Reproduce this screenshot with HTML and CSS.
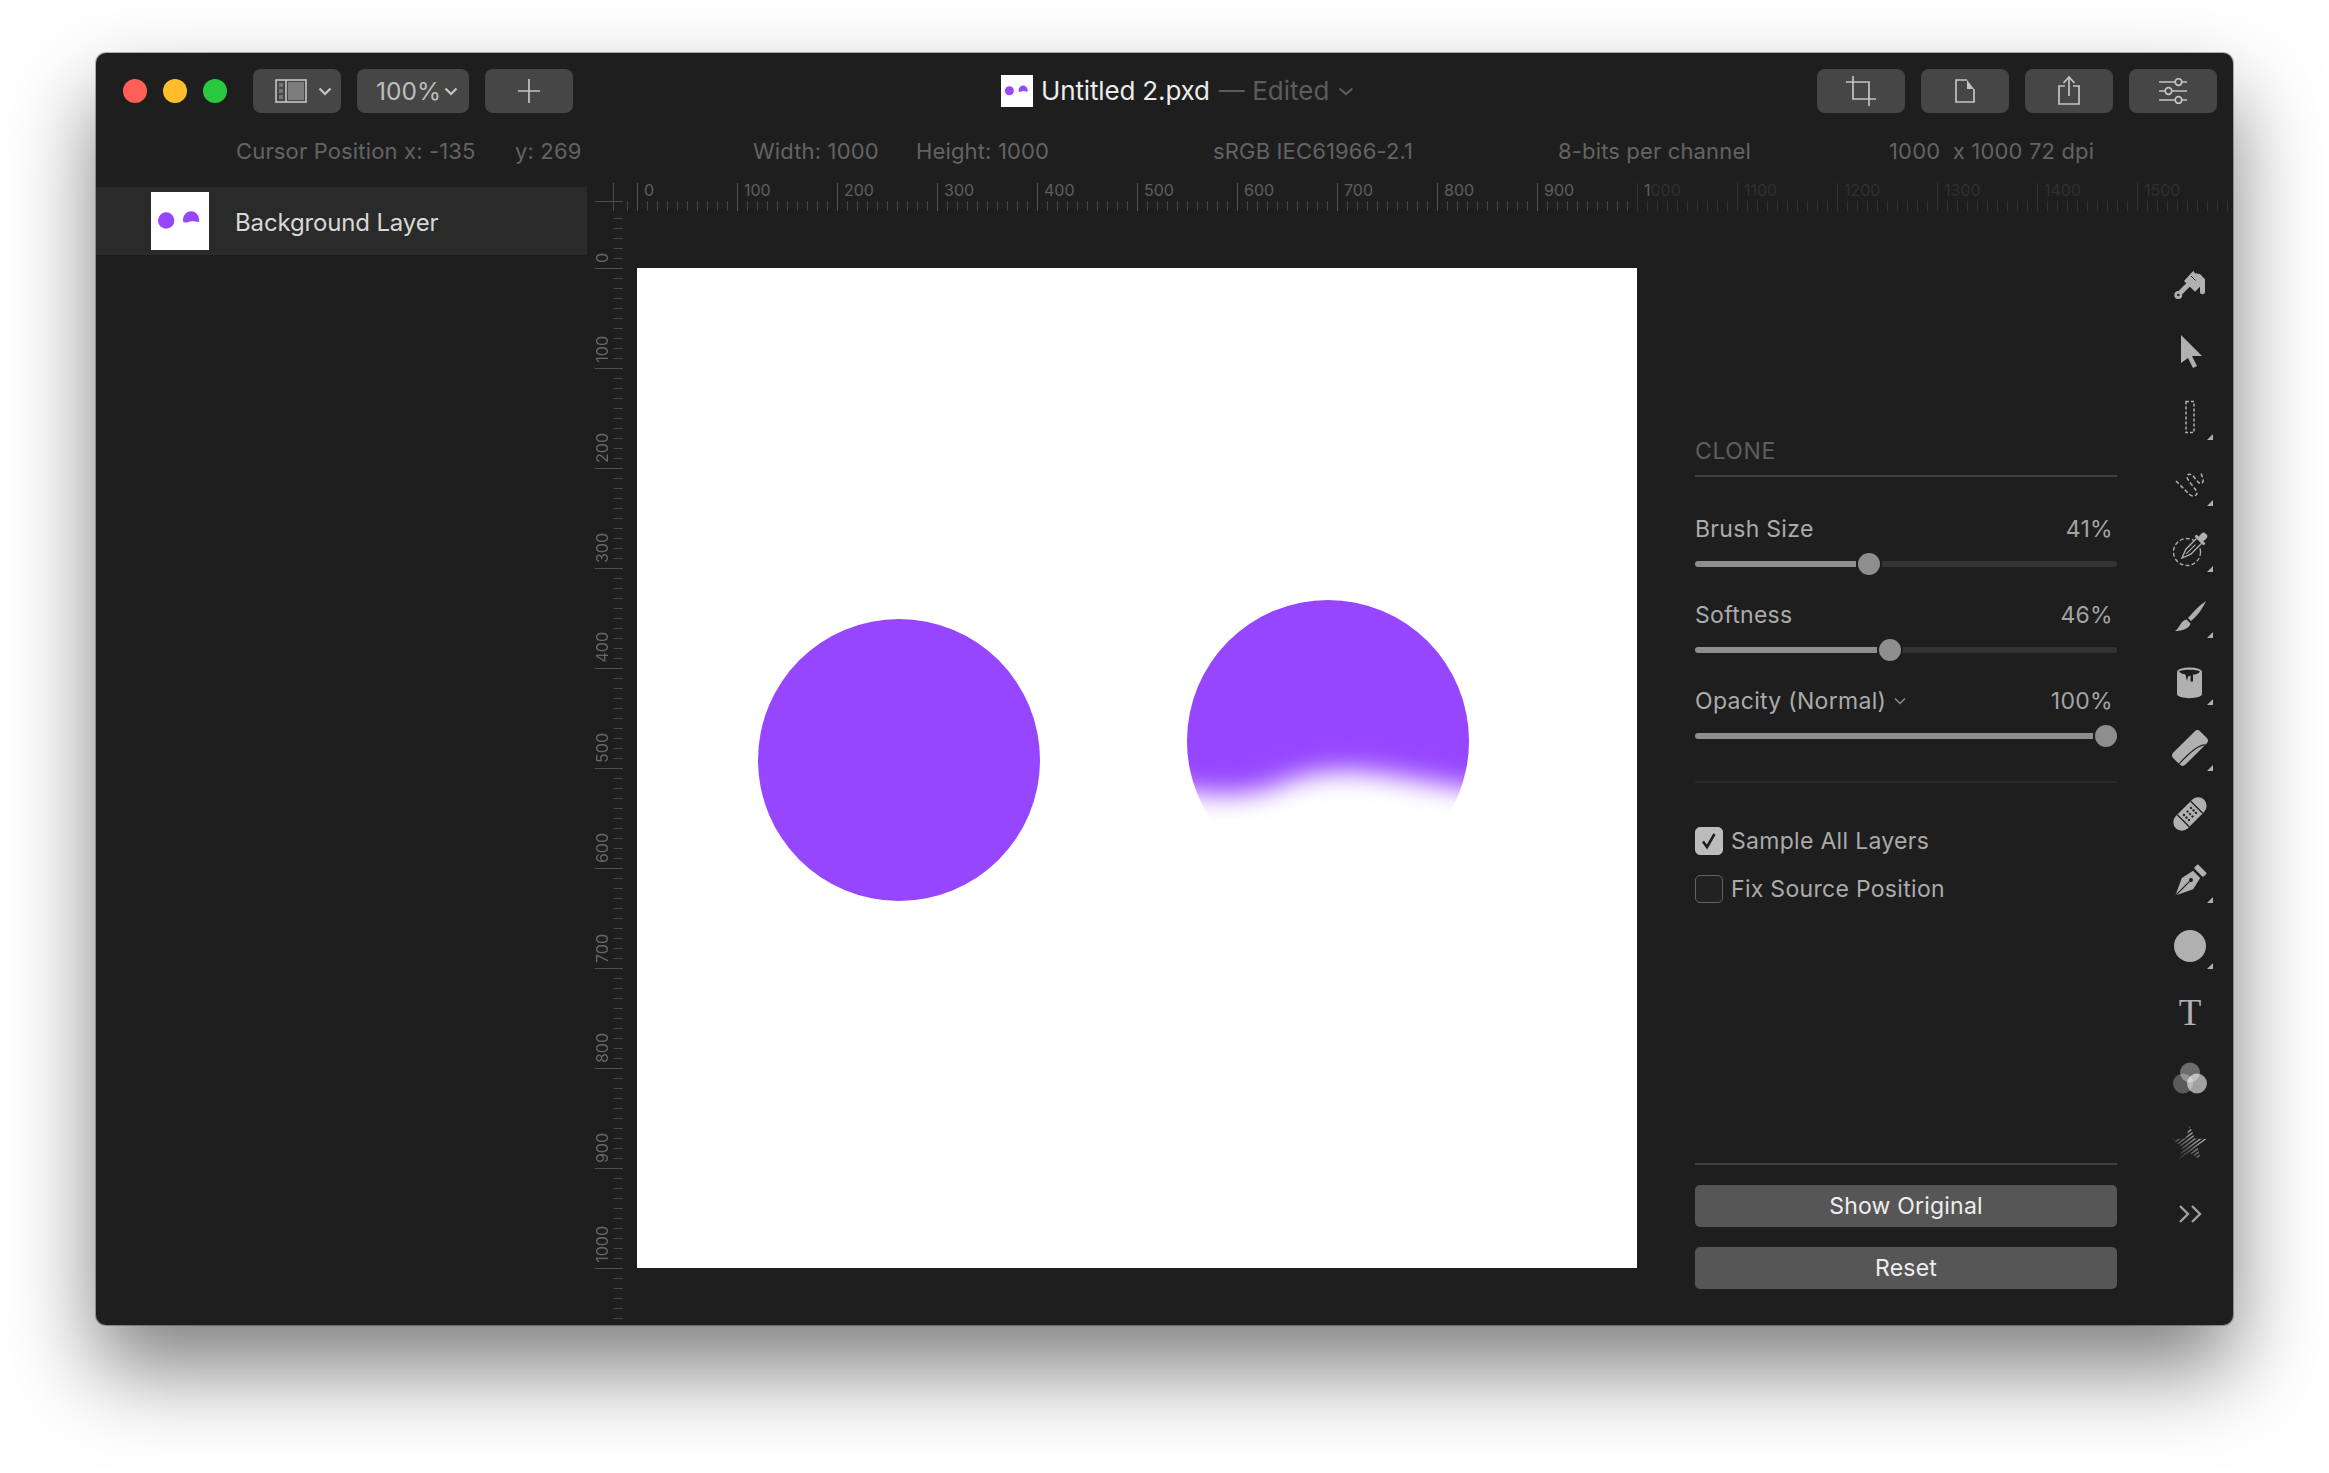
FILE: index.html
```html
<!DOCTYPE html>
<html lang="en">
<head>
<meta charset="utf-8">
<title>Untitled 2.pxd</title>
<link rel="stylesheet" href="styles.css">
</head>
<body>
<svg class="defs" width="0" height="0" aria-hidden="true">
  <defs>
    <filter id="soft" filterUnits="userSpaceOnUse" x="0" y="0" width="1000" height="1000"><feGaussianBlur stdDeviation="13"/></filter>
    <mask id="fade" maskUnits="userSpaceOnUse" x="0" y="0" width="1000" height="1000">
      <path filter="url(#soft)" fill="#fff" d="M480 290H900V529C850 527 800 514 745 506C710 501 680 501 640 517C600 532 560 527 480 510Z"/>
    </mask>
    <g id="scene">
      <rect width="1000" height="1000" fill="#fff"/>
      <circle cx="262" cy="492" r="141" fill="#9646ff"/>
      <circle cx="691" cy="473" r="141" fill="#9646ff" mask="url(#fade)"/>
    </g>
  </defs>
</svg>
<main class="window">
  <header class="titlebar">
    <div class="lights"><i class="light red"></i><i class="light yellow"></i><i class="light green"></i></div>
    <div class="tbtn sidebar-btn">
      <svg width="32" height="24" viewBox="0 0 32 24"><rect x="1" y="1" width="30" height="22" fill="none" stroke="#c4c4c4" stroke-width="1.600"/><line x1="11" y1="1" x2="11" y2="23" stroke="#c4c4c4" stroke-width="1.600"/><rect x="13" y="3" width="16" height="18" fill="#7c7c7c"/><rect x="4" y="4" width="4" height="4" fill="#777"/><rect x="4" y="10" width="4" height="4" fill="#777"/><rect x="4" y="16" width="4" height="4" fill="#777"/></svg>
      <svg class="chev" width="14" height="9" viewBox="0 0 14 9"><path d="M1.500 1.500 7 7l5.500-5.500" fill="none" stroke="#c8c8c8" stroke-width="2.200"/></svg>
    </div>
    <div class="tbtn zoom-btn"><span>100%</span><svg class="chev" width="14" height="9" viewBox="0 0 14 9"><path d="M1.500 1.500 7 7l5.500-5.500" fill="none" stroke="#c8c8c8" stroke-width="2.200"/></svg></div>
    <div class="tbtn center-btn"><svg width="24" height="24" viewBox="0 0 24 24"><path d="M12 0v24M1 12h22" stroke="#c4c4c4" stroke-width="1.700" fill="none"/></svg></div>
    <div class="doc-title">
      <svg class="doc-thumb" viewBox="0 0 1000 1000"><use href="#scene"/></svg>
      <span class="doc-name">Untitled 2.pxd</span>
      <span class="doc-state">— Edited</span>
      <svg width="16" height="9" viewBox="0 0 16 9"><path d="M1.500 1.500 8 7l6.500-5.500" fill="none" stroke="#5c5c5c" stroke-width="2.200"/></svg>
    </div>
    <div class="actions">
      <div class="tbtn center-btn"><svg width="30" height="30" viewBox="0 0 30 30"><path d="M7 0V23H30M0 6H23V30" fill="none" stroke="#c4c4c4" stroke-width="1.700"/></svg></div>
      <div class="tbtn center-btn"><svg width="22" height="26" viewBox="0 0 22 26"><path d="M13 2H2V24H20V11" fill="none" stroke="#c4c4c4" stroke-width="1.700"/><path d="M13 2 20 11H13Z" fill="#c4c4c4"/></svg></div>
      <div class="tbtn center-btn"><svg width="24" height="30" viewBox="0 0 24 30"><path d="M8 10H2V28H22V10H16M12 20V1M6.500 7 12 1l5.500 6" fill="none" stroke="#c4c4c4" stroke-width="1.700"/></svg></div>
      <div class="tbtn center-btn"><svg width="30" height="26" viewBox="0 0 30 26"><g fill="none" stroke="#c4c4c4" stroke-width="1.700"><path d="M1 4h16M24 4h5M1 13h6M14 13h15M1 22h16M24 22h5"/><circle cx="20.500" cy="4" r="3.300"/><circle cx="10.500" cy="13" r="3.300"/><circle cx="20.500" cy="22" r="3.300"/></g></svg></div>
    </div>
  </header>

  <div class="status">
    <span>Cursor Position x: -135</span>
    <span>y: 269</span>
    <span>Width: 1000</span>
    <span>Height: 1000</span>
    <span>sRGB IEC61966-2.1</span>
    <span>8-bits per channel</span>
    <span class="pre">1000  x 1000 72 dpi</span>
  </div>

  <div class="body">
    <aside class="layers">
      <div class="layer-row">
        <svg class="layer-thumb" viewBox="0 0 1000 1000"><use href="#scene"/></svg>
        <span class="layer-name">Background Layer</span>
      </div>
    </aside>

    <section class="stage">
      <div class="hruler">
        <div class="corner"></div>
        <div class="hlead"></div>
        <div class="hmark"><span>0</span></div>
        <div class="hmark"><span>100</span></div>
        <div class="hmark"><span>200</span></div>
        <div class="hmark"><span>300</span></div>
        <div class="hmark"><span>400</span></div>
        <div class="hmark"><span>500</span></div>
        <div class="hmark"><span>600</span></div>
        <div class="hmark"><span>700</span></div>
        <div class="hmark"><span>800</span></div>
        <div class="hmark"><span>900</span></div>
        <div class="hmark dim"><span><b>1</b>000</span></div>
        <div class="hmark dim"><span>1100</span></div>
        <div class="hmark dim"><span>1200</span></div>
        <div class="hmark dim"><span>1300</span></div>
        <div class="hmark dim"><span>1400</span></div>
        <div class="hmark dim last"><span>1500</span></div>
      </div>

      <div class="workspace">
        <div class="vruler">
          <div class="vmark first"><span>0</span></div>
          <div class="vmark"><span>100</span></div>
          <div class="vmark"><span>200</span></div>
          <div class="vmark"><span>300</span></div>
          <div class="vmark"><span>400</span></div>
          <div class="vmark"><span>500</span></div>
          <div class="vmark"><span>600</span></div>
          <div class="vmark"><span>700</span></div>
          <div class="vmark"><span>800</span></div>
          <div class="vmark"><span>900</span></div>
          <div class="vmark"><span>1000</span></div>
          <div class="vtail"></div>
        </div>

        <svg class="canvas" viewBox="0 0 1000 1000"><use href="#scene"/></svg>

        <div class="panel">
          <h2 class="panel-title">CLONE</h2>
          <div class="sliders">
            <div class="control">
              <div class="control-row"><span>Brush Size</span><span class="value">41%</span></div>
              <div class="slider"><i class="fill" style="width:161px"></i><i class="thumb"></i><i class="rest"></i></div>
            </div>
            <div class="control">
              <div class="control-row"><span>Softness</span><span class="value">46%</span></div>
              <div class="slider"><i class="fill" style="width:182px"></i><i class="thumb"></i><i class="rest"></i></div>
            </div>
            <div class="control">
              <div class="control-row"><span class="with-chev">Opacity (Normal)<svg width="12" height="8" viewBox="0 0 12 8"><path d="M1 1.500 6 6.500l5-5" fill="none" stroke="#8c8c8c" stroke-width="1.500"/></svg></span><span class="value">100%</span></div>
              <div class="slider"><i class="fill" style="width:398px"></i><i class="thumb"></i></div>
            </div>
          </div>
          <div class="checks">
            <label class="check"><i class="box on"><svg width="20" height="20" viewBox="0 0 20 20"><path d="M4 10.500 8 16 15.500 3" fill="none" stroke="#1e1e1e" stroke-width="2.600"/></svg></i>Sample All Layers</label>
            <label class="check"><i class="box"></i>Fix Source Position</label>
          </div>
          <div class="panel-actions">
            <div class="wide-btn">Show Original</div>
            <div class="wide-btn">Reset</div>
          </div>
        </div>

        <nav class="tools">
          <div class="tool"><svg viewBox="-24 -24 48 48"><path d="M-6-4 3.300-14.300 5-11.700 10-11 15-5.700V6.700a2.500 2.500 0 0 1-5 0V1.700L5 6.700Z"/><path d="M1-9 5.500-4.500" stroke="#1e1e1e" stroke-width="1"/><path d="M-1-1-9.500 7.500" stroke="#b0b0b0" stroke-width="5"/><circle cx="-11.700" cy="10" r="2.600" fill="#1e1e1e" stroke="#b0b0b0" stroke-width="2.600"/></svg></div>
          <div class="tool"><svg viewBox="-24 -24 48 48"><path d="M-9-16 12 5H2L7 15l-4 2L-2 7-9 12z"/></svg></div>
          <div class="tool more"><svg viewBox="-24 -24 48 48"><rect x="-4" y="-15.500" width="8" height="31" fill="none" stroke="#b0b0b0" stroke-width="1.500" stroke-dasharray="3 2"/></svg></div>
          <div class="tool more"><svg viewBox="-24 -24 48 48"><path d="M-14-2-2 10C1 14 7 14 7 10 7 6-4-3-3-7-2-10 2-9 4-6L8-1C11 2 14 0 13-4L11-10" fill="none" stroke="#b0b0b0" stroke-width="1.500" stroke-dasharray="4 2.200"/></svg></div>
          <div class="tool more"><svg viewBox="-24 -24 48 48"><circle cx="-3" cy="3" r="13.500" fill="none" stroke="#b0b0b0" stroke-width="1.300" stroke-dasharray="4 2.200"/><g transform="translate(4 -3) rotate(45)"><path d="M-3.500-7V8L0 17 3.500 8V-7" fill="#1e1e1e" stroke="#b0b0b0" stroke-width="1.300"/><path d="M0 11V-2" stroke="#b0b0b0" stroke-width="1"/><rect x="-6.500" y="-10" width="13" height="3" rx="1.200"/><rect x="-3.500" y="-17" width="7" height="8" rx="3"/></g></svg></div>
          <div class="tool more"><svg viewBox="-24 -24 48 48"><path d="M16-15C12-6 6 1 1 5L-2 2C3-4 10-11 16-15Z"/><path d="M-3.500 3.500 .5 7.500C-1 13-8 15-15 15-10 12-10 5-3.500 3.500Z"/></svg></div>
          <div class="tool more"><svg viewBox="-24 -24 48 48"><path d="M-13-9V12C-13 17.500 12 17.500 12 12V-9Z"/><ellipse cx="-.5" cy="-10" rx="12.500" ry="4.500"/><path d="M-11-10.500C-9-13 8-13 10-10.500 8.500-8 5-7.500 3-7.500V-.5H.5V-6.500L-2-5.500-3-1-4.500-7.500C-7-8-10-9-11-10.500Z" fill="#1e1e1e"/></svg></div>
          <div class="tool more"><svg viewBox="-24 -24 48 48"><g transform="rotate(45)"><rect x="-8.500" y="-19" width="17" height="38" rx="4"/><path d="M8.500-13C3-8 3 8 3.500 19" fill="none" stroke="#1e1e1e" stroke-width="1.200"/></g></svg></div>
          <div class="tool"><svg viewBox="-24 -24 48 48"><g transform="rotate(45)"><rect x="-8.500" y="-20" width="17" height="40" rx="8.500"/><path d="M-8.500-9.500H8.500M-8.500 9.500H8.500" stroke="#1e1e1e" stroke-width="1.300"/><g fill="#1e1e1e"><circle cx="-3.500" cy="-5" r="1.200"/><circle cy="-5" r="1.200"/><circle cx="3.500" cy="-5" r="1.200"/><circle cx="-3.500" r="1.200"/><circle r="1.200"/><circle cx="3.500" r="1.200"/><circle cx="-3.500" cy="5" r="1.200"/><circle cy="5" r="1.200"/><circle cx="3.500" cy="5" r="1.200"/></g></g></svg></div>
          <div class="tool more"><svg viewBox="-24 -24 48 48"><g transform="translate(1 0) rotate(45)"><path d="M0 22-8 5-5-8H5L8 5Z"/><rect x="-6.500" y="-16" width="13" height="5.500" rx="1"/><path d="M0 22V2" stroke="#1e1e1e" stroke-width="1.200"/><circle r="2" fill="#1e1e1e"/></g></svg></div>
          <div class="tool more"><svg viewBox="-24 -24 48 48"><circle r="16"/></svg></div>
          <div class="tool tool-t">T</div>
          <div class="tool"><svg viewBox="-24 -24 48 48"><g fill="#fff"><circle cx="0" cy="-5.500" r="10" opacity=".35"/><circle cx="-7" cy="5.500" r="10" opacity=".27"/><circle cx="7" cy="5.500" r="10" opacity=".58"/></g></svg></div>
          <div class="tool"><svg viewBox="-24 -24 48 48"><defs><clipPath id="star"><polygon points="0,-18 4.700,-5.500 18,-5 7.600,3.500 11.200,16.400 0,9 -11.200,16.400 -7.600,3.500 -18,-5 -4.700,-5.500"/></clipPath><linearGradient id="stripes" gradientUnits="userSpaceOnUse" x1="14" y1="-12" x2="-12" y2="12"><stop offset="0" stop-color="#d0d0d0"/><stop offset="1" stop-color="#2c2c2c"/></linearGradient></defs><path clip-path="url(#star)" fill="none" stroke="url(#stripes)" stroke-width="1.400" d="M-25 -6.750L25 -44.250M-25 -2.750L25 -40.250M-25 1.250L25 -36.250M-25 5.250L25 -32.250M-25 9.250L25 -28.250M-25 13.250L25 -24.250M-25 17.250L25 -20.250M-25 21.250L25 -16.250M-25 25.250L25 -12.250M-25 29.250L25 -8.250M-25 33.250L25 -4.250M-25 37.250L25 -.25"/></svg></div>
          <div class="tool tool-last"><svg viewBox="-24 -24 48 48"><path d="M-10-8-2 0l-8 8M2-8 10 0 2 8" fill="none" stroke="#a0a0a0" stroke-width="2.400"/></svg></div>
        </nav>
      </div>
    </section>
  </div>
</main>
</body>
</html>
```
FILE: styles.css
```css
* { box-sizing: border-box; }
html, body { margin: 0; padding: 0; }
body {
  width: 2329px;
  height: 1473px;
  padding: 53px 0 0 96px;
  background: #fff;
  overflow: hidden;
  font-family: Inter, "Liberation Sans", sans-serif;
}
.defs { display: block; height: 0; }
.window {
  width: 2137px;
  height: 1272px;
  background: #1e1e1e;
  border-radius: 10px;
  overflow: hidden;
  display: flex;
  flex-direction: column;
  box-shadow: 0 0 0 1px rgba(0, 0, 0, .28), 0 44px 86px rgba(0, 0, 0, .5);
}

/* title bar */
.titlebar {
  display: flex;
  align-items: center;
  height: 60px;
  padding: 16px 16px 0 27px;
  flex: none;
}
.lights { display: flex; gap: 16px; margin-right: 26px; }
.light { width: 24px; height: 24px; border-radius: 50%; display: block; }
.red { background: #ff5f57; }
.yellow { background: #ffbd2e; }
.green { background: #28c940; }
.tbtn {
  height: 44px;
  width: 88px;
  border-radius: 8px;
  background: #464646;
  display: flex;
  align-items: center;
  color: #bdbdbd;
  flex: none;
}
.tbtn + .tbtn { margin-left: 16px; }
.center-btn { justify-content: center; }
.sidebar-btn { padding-left: 22px; gap: 11px; }
.zoom-btn { width: 112px; padding-left: 19px; gap: 3px; font-size: 24.500px; }
.doc-title {
  display: flex;
  align-items: center;
  margin-left: 428px;
  font-size: 26px;
}
.doc-thumb { width: 32px; height: 32px; display: block; margin-right: 8px; }
.doc-name { color: #ececec; margin-right: 9px; letter-spacing: -.15px; padding-bottom: 2px; }
.doc-state { color: #5c5c5c; margin-right: 9px; padding-bottom: 2px; }
.actions { display: flex; margin-left: auto; }

/* status line */
.status {
  flex: none;
  height: 70px;
  padding: 23px 0 0 140px;
  display: grid;
  grid-template-columns: 279px 238px 163px 297px 345px 331px auto;
  align-items: start;
  color: #636363;
  font-size: 22px;
  letter-spacing: .15px;
  line-height: 30px;
}
.pre { white-space: pre; }

/* body */
.body { flex: 1; display: flex; min-height: 0; }
.layers { width: 491px; flex: none; padding-top: 4px; }
.layer-row {
  height: 68px;
  background: #2a2a2a;
  display: flex;
  align-items: center;
  padding-left: 55px;
  color: #d8d8d8;
  font-size: 24px;
}
.layer-thumb { width: 58px; height: 58px; display: block; margin-right: 26px; }
.layer-name { padding-top: 3px; letter-spacing: -.15px; }

.stage { flex: 1; min-width: 0; padding-left: 8px; display: flex; flex-direction: column; }

/* rulers */
.hruler { display: flex; height: 28px; flex: none; font-size: 16px; line-height: 14px; color: #5e5e5e; }
.corner {
  width: 32px;
  background:
    linear-gradient(#4c4c4c, #4c4c4c) 18px 0 / 1px 100% no-repeat,
    linear-gradient(#4c4c4c, #4c4c4c) 0 18px / 28px 1px no-repeat;
}
.hlead {
  width: 10px;
  background: linear-gradient(90deg, #444 1px, transparent 1px) 0 100% / 10px 10px repeat-x;
}
.hmark {
  width: 100px;
  flex: none;
  padding-left: 7px;
  background:
    linear-gradient(#505050, #505050) 0 0 / 1px 100% no-repeat,
    linear-gradient(90deg, #444 1px, transparent 1px) 0 100% / 10px 10px repeat-x;
}
.hmark.dim {
  color: #303030;
  background:
    linear-gradient(#333, #333) 0 0 / 1px 100% no-repeat,
    linear-gradient(90deg, #313131 1px, transparent 1px) 0 100% / 10px 10px repeat-x;
}
.hmark.last { width: 92px; }
.hmark b { font-weight: 400; color: #5e5e5e; }

.workspace { flex: 1; display: flex; min-height: 0; }
.vruler { width: 28px; flex: none; padding-top: 7px; color: #666; font-size: 16px; }
.vmark {
  height: 100px;
  display: flex;
  flex-direction: column;
  justify-content: flex-end;
  align-items: flex-start;
  padding-bottom: 6px;
  background:
    linear-gradient(#505050, #505050) 0 100% / 100% 1px no-repeat,
    linear-gradient(transparent 9px, #444 9px) 100% 100% / 10px 10px repeat-y;
}
.vmark.first { height: 51px; }
.vmark span { writing-mode: vertical-rl; transform: rotate(180deg); line-height: 14px; }
.vtail {
  height: 50px;
  background: linear-gradient(transparent 9px, #444 9px) 100% 100% / 10px 10px repeat-y;
}
.canvas { width: 1000px; height: 1000px; margin: 57px 0 0 14px; display: block; flex: none; }

/* panel */
.panel {
  width: 422px;
  margin-left: 58px;
  flex: none;
  display: flex;
  flex-direction: column;
  padding: 227px 0 36px;
  color: #ababab;
  font-size: 23px;
  letter-spacing: .3px;
}
.panel-title {
  margin: 0;
  height: 39px;
  border-bottom: 2px solid #404040;
  font-size: 23px;
  letter-spacing: .6px;
  font-weight: 400;
  line-height: 26px;
  color: #5e5e5e;
}
.sliders {
  padding-top: 37px;
  display: flex;
  flex-direction: column;
  gap: 25px;
  padding-bottom: 34px;
  border-bottom: 2px solid #2a2a2a;
}
.control-row {
  height: 30px;
  line-height: 30px;
  display: flex;
  justify-content: space-between;
  padding: 0 4px 0 0;
  margin-bottom: 9px;
}
.with-chev { display: flex; align-items: center; gap: 8px; }
.value { color: #a4a4a4; }
.slider { display: flex; align-items: center; height: 22px; gap: 2px; }
.fill { display: block; height: 6px; background: #8e8e8e; border-radius: 3px 0 0 3px; }
.thumb { display: block; width: 22px; height: 22px; border-radius: 50%; background: #8e8e8e; flex: none; }
.rest { display: block; flex: 1; height: 6px; background: #333; border-radius: 0 3px 3px 0; }

.checks { padding-top: 44px; display: flex; flex-direction: column; gap: 20px; }
.check { display: flex; align-items: center; height: 28px; gap: 8px; color: #ababab; }
.box {
  width: 28px;
  height: 28px;
  border-radius: 5px;
  border: 1.500px solid #626262;
  background: #222;
  display: flex;
  align-items: center;
  justify-content: center;
}
.box.on { background: #bcbcbc; border-color: #bcbcbc; }

.panel-actions {
  margin-top: auto;
  border-top: 2px solid #404040;
  padding-top: 20px;
  display: flex;
  flex-direction: column;
  gap: 20px;
}
.wide-btn {
  height: 42px;
  border-radius: 5px;
  background: #565656;
  color: #eee;
  font-size: 23px;
  letter-spacing: .2px;
  line-height: 42px;
  text-align: center;
}

/* tools */
.tools { flex: 1; padding: 41px 0 0 30px; display: flex; flex-direction: column; align-items: center; }
.tool {
  height: 66.100px;
  width: 48px;
  flex: none;
  display: flex;
  align-items: center;
  justify-content: center;
  position: relative;
  fill: #b0b0b0;
}
.tool svg { width: 48px; height: 48px; display: block; }
.tool.more::after {
  content: "";
  position: absolute;
  left: 41px;
  top: 50px;
  width: 0;
  height: 0;
  border-left: 6px solid transparent;
  border-bottom: 6px solid #b0b0b0;
}
.tool-last { margin-top: 4px; }
.tool-t {
  font-family: "Liberation Serif", serif;
  font-size: 37px;
  color: #b0b0b0;
}
```
